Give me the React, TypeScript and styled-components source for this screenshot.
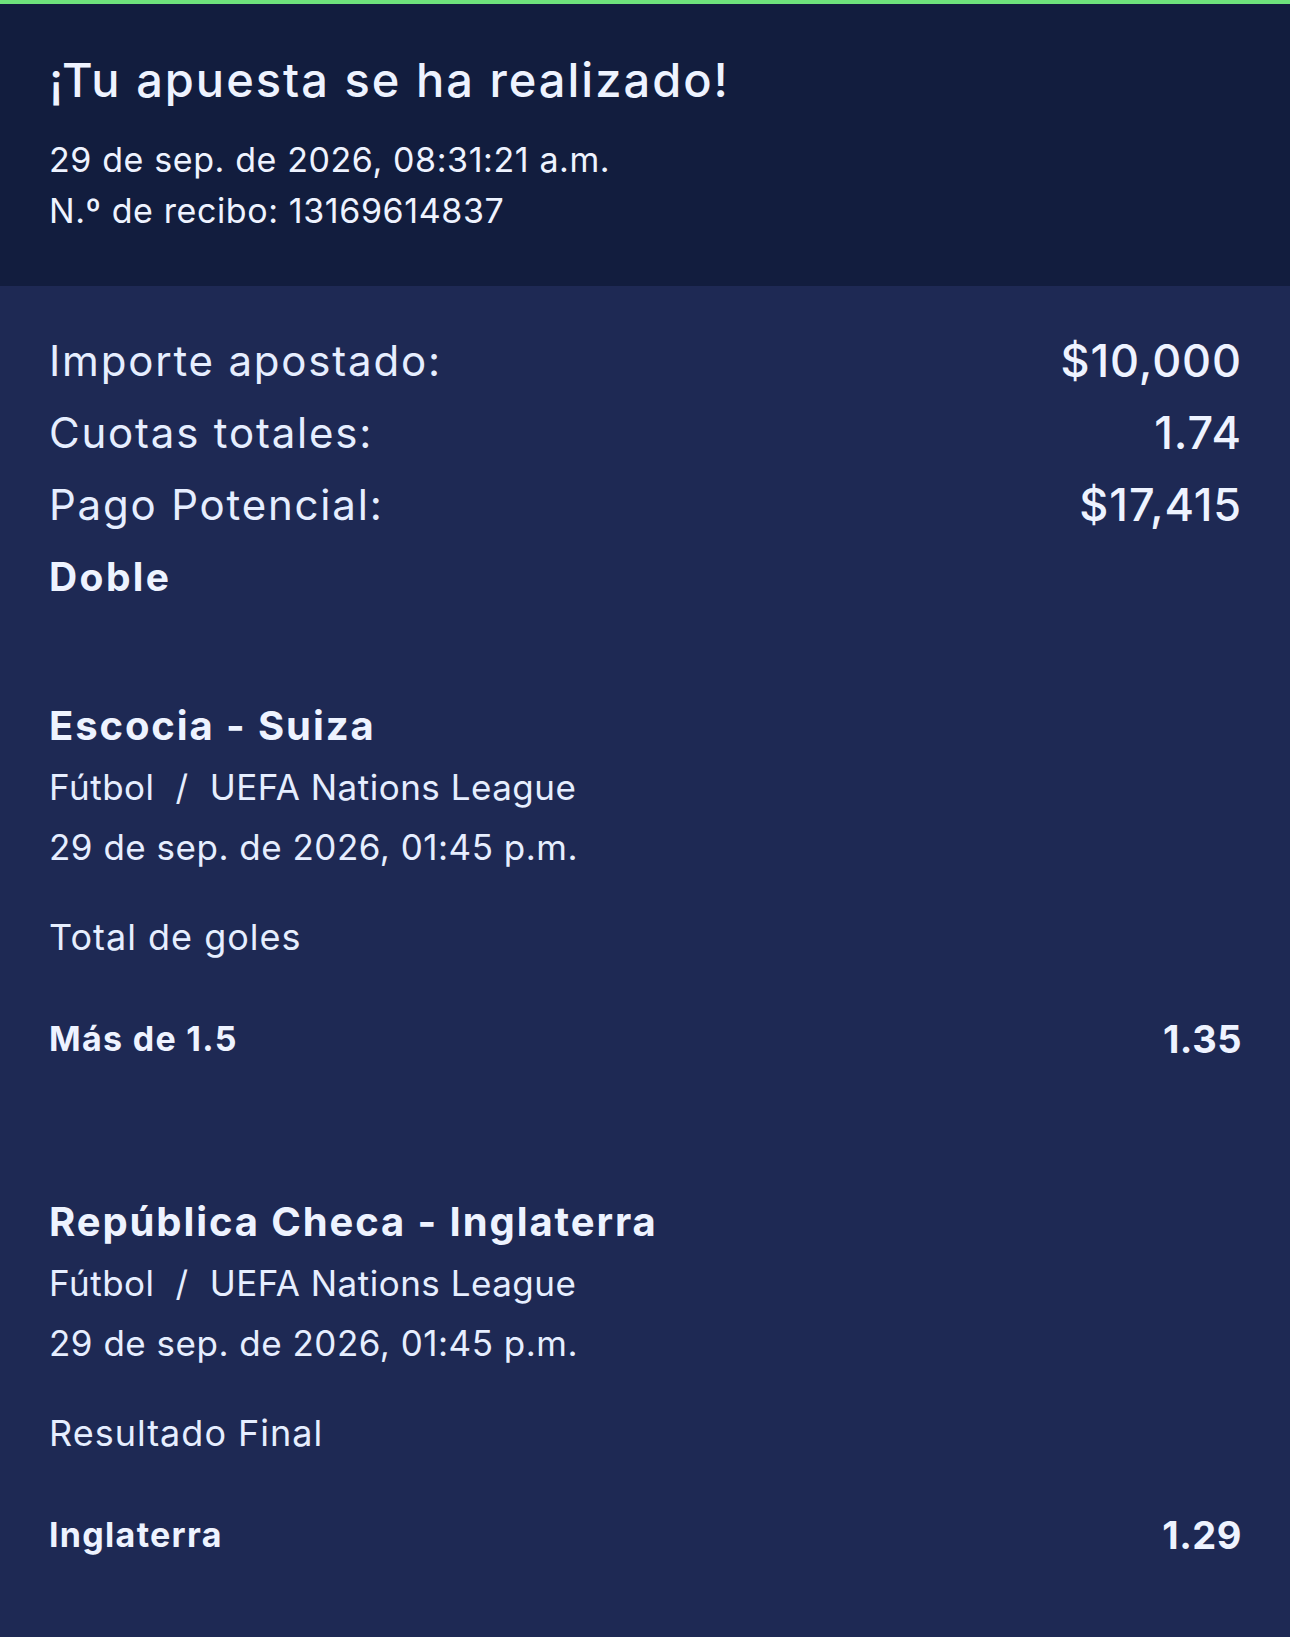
import styled, { createGlobalStyle } from 'styled-components'

const GlobalStyle = createGlobalStyle`
    html, body {
        margin: 0;
        padding: 0;
        background: #1e2954;
    }
    * {
        box-sizing: border-box;
    }
`

const Page = styled.div`
    width: 1290px;
    min-height: 1637px;
    background: #1e2954;
    color: #eef3ff;
    font-family: Inter, 'Noto Sans', sans-serif;
`

const Header = styled.div`
    border-top: 4px solid #6ee27c;
    background: #121d3e;
    padding: 46px 48px 50px 49px;
`

const Title = styled.div`
    font-size: 47px;
    font-weight: 500;
    letter-spacing: 2px;
    line-height: 60px;
    margin-bottom: 24px;
`

const Meta = styled.div`
    font-size: 34px;
    font-weight: 400;
    letter-spacing: 0.6px;
    line-height: 51px;
`

const Body = styled.div`
    padding: 39px 48px 60px 49px;
`

const SummaryRow = styled.div`
    display: flex;
    justify-content: space-between;
    align-items: center;
    font-size: 42px;
    letter-spacing: 1.8px;
    line-height: 72px;
    .label {
        color: #e6eeff;
    }
    .value {
        font-size: 45px;
        font-weight: 500;
        letter-spacing: 0.9px;
    }
`

const BetType = styled.div`
    font-size: 39px;
    font-weight: 700;
    letter-spacing: 2.4px;
    line-height: 72px;
`

const Selection = styled.div`
    margin-top: 82px;
    padding-bottom: 40px;
`

const EventName = styled.div`
    font-size: 40px;
    font-weight: 700;
    letter-spacing: 1.9px;
    line-height: 62px;
`

const EventInfo = styled.div`
    font-size: 35px;
    letter-spacing: 0.5px;
    line-height: 60px;
    color: #e6eeff;
    .sep {
        margin: 0 21px;
    }
`

const Market = styled.div`
    margin-top: 30px;
    font-size: 36px;
    letter-spacing: 1px;
    line-height: 60px;
    color: #e6eeff;
`

const Pick = styled.div`
    margin-top: 42px;
    display: flex;
    justify-content: space-between;
    align-items: center;
    font-size: 34px;
    font-weight: 700;
    letter-spacing: 1.3px;
    line-height: 60px;
    .odds {
        font-size: 38px;
        letter-spacing: 0.5px;
    }
`

const selections = [
    { event: 'Escocia - Suiza', market: 'Total de goles', pick: 'Más de 1.5', odds: '1.35' },
    { event: 'República Checa - Inglaterra', market: 'Resultado Final', pick: 'Inglaterra', odds: '1.29' }
]

const App = () => {
    return (
        <Page>
            <GlobalStyle />
            <Header>
                <Title>¡Tu apuesta se ha realizado!</Title>
                <Meta>29 de sep. de 2026, 08:31:21 a.m.</Meta>
                <Meta>N.º de recibo: 13169614837</Meta>
            </Header>
            <Body>
                <SummaryRow>
                    <span className='label'>Importe apostado:</span>
                    <span className='value'>$10,000</span>
                </SummaryRow>
                <SummaryRow>
                    <span className='label'>Cuotas totales:</span>
                    <span className='value'>1.74</span>
                </SummaryRow>
                <SummaryRow>
                    <span className='label'>Pago Potencial:</span>
                    <span className='value'>$17,415</span>
                </SummaryRow>
                <BetType>Doble</BetType>
                {
                    selections.map((item) => (
                        <Selection key={item.event}>
                            <EventName>{item.event}</EventName>
                            <EventInfo>
                                Fútbol<span className='sep'>/</span>UEFA Nations League
                            </EventInfo>
                            <EventInfo>29 de sep. de 2026, 01:45 p.m.</EventInfo>
                            <Market>{item.market}</Market>
                            <Pick>
                                <span>{item.pick}</span>
                                <span className='odds'>{item.odds}</span>
                            </Pick>
                        </Selection>
                    ))
                }
            </Body>
        </Page>
    )
}

export default App
